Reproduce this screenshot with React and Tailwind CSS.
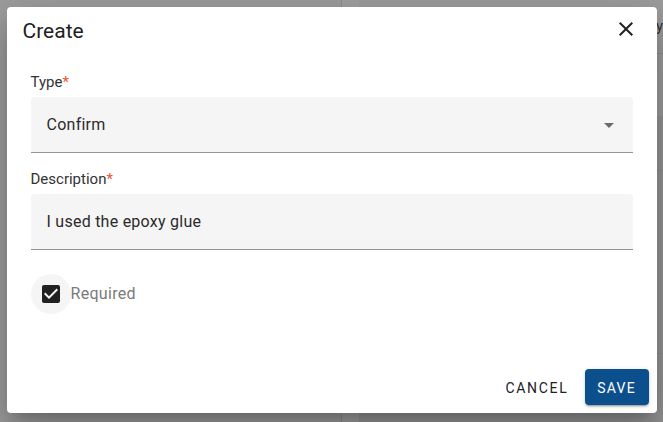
import React from 'react'

const font = { fontFamily: 'Roboto, "Liberation Sans", sans-serif' }

const Field = ({ label, value, select }) => (
  <div className="flex flex-col">
    <div className="h-[20px] leading-[20px] text-[15px] text-[#333]">
      {label}<span className="text-[#f4511e]">*</span>
    </div>
    <div className="mt-[5px] h-[56px] flex items-center rounded-t-[4px] bg-[#f5f5f5] border-b border-[#949494] pl-4 pr-3">
      <span className="flex-1 text-[16px] text-[#2b2b2b] tracking-[0.25px]">{value}</span>
      {select && (
        <svg width="24" height="24" viewBox="0 0 24 24" className="fill-[#6b6b6b]">
          <path d="M7 10l5 5 5-5z" />
        </svg>
      )}
    </div>
  </div>
)

export default function App() {
  return (
    <div className="relative h-[422px] w-full overflow-hidden bg-[#9e9e9e]" style={font}>
      {/* page behind the scrim */}
      <div className="flex h-full">
        <div className="w-[343px] border-r border-[#8e8e8e]" />
        <div className="w-[17px] bg-[#a2a2a2]" />
        <div className="flex-1 flex flex-col">
          <div className="h-[54px] border-b border-[#8e8e8e] flex items-center pl-[297px] text-[15px] text-[#333]">y</div>
          <div className="h-[62px]" />
          <div className="h-[55px] border-b border-[#8e8e8e] bg-[#979797]" />
          <div className="h-[183px] bg-[#979797] border-b border-[#8e8e8e]" />
          <div className="flex-1 bg-[#979797]" />
        </div>
      </div>

      {/* dialog */}
      <div className="absolute inset-0 flex items-start justify-center pt-[7px]">
        <div className="w-[650px] h-[406px] bg-white rounded-[4px] flex flex-col shadow-[0px_11px_15px_-7px_rgba(0,0,0,0.2),0px_24px_38px_3px_rgba(0,0,0,0.14),0px_9px_46px_8px_rgba(0,0,0,0.12)]">
          <div className="flex items-center justify-between pl-4 pr-[19px] pt-2 h-[40px]">
            <span className="text-[21px] leading-[32px] text-[#212121]">Create</span>
            <svg width="24" height="24" viewBox="0 0 24 24" className="fill-[#212121] -mt-[4px]">
              <path d="M19 6.41L17.59 5 12 10.59 6.41 5 5 6.41 10.59 12 5 17.59 6.41 19 12 13.41 17.59 19 19 17.59 13.41 12z" />
            </svg>
          </div>

          <div className="flex flex-col px-6 pt-[25px] flex-1">
            <Field label="Type" value="Confirm" select />
            <div className="h-[16px]" />
            <Field label="Description" value="I used the epoxy glue" />

            <div className="mt-[24px] flex items-center">
              <div className="w-[40px] h-[40px] rounded-full bg-[#f5f5f5] flex items-center justify-center">
                <svg width="24" height="24" viewBox="0 0 24 24" className="fill-[#212121]">
                  <path d="M19 3H5c-1.11 0-2 .9-2 2v14c0 1.1.89 2 2 2h14c1.11 0 2-.9 2-2V5c0-1.1-.89-2-2-2zm-9 14l-5-5 1.41-1.41L10 14.17l7.59-7.59L19 8l-9 9z" />
                </svg>
              </div>
              <span className="text-[16px] text-[#7a7a7a] tracking-[0.3px]">Required</span>
            </div>
          </div>

          <div className="flex items-center justify-end gap-2 pt-2 pr-2 pb-[8px]">
            <button className="h-[36px] px-2 pt-[3px] text-[14px] tracking-[1.7px] text-[#212121] uppercase">
              Cancel
            </button>
            <button className="h-[36px] w-[64px] pt-[3px] rounded-[4px] bg-[#0b4f8c] text-white text-[14px] tracking-[1.25px] uppercase shadow-[0px_3px_1px_-2px_rgba(0,0,0,0.2),0px_2px_2px_0px_rgba(0,0,0,0.14),0px_1px_5px_0px_rgba(0,0,0,0.12)]">
              Save
            </button>
          </div>
        </div>
      </div>
    </div>
  )
}
